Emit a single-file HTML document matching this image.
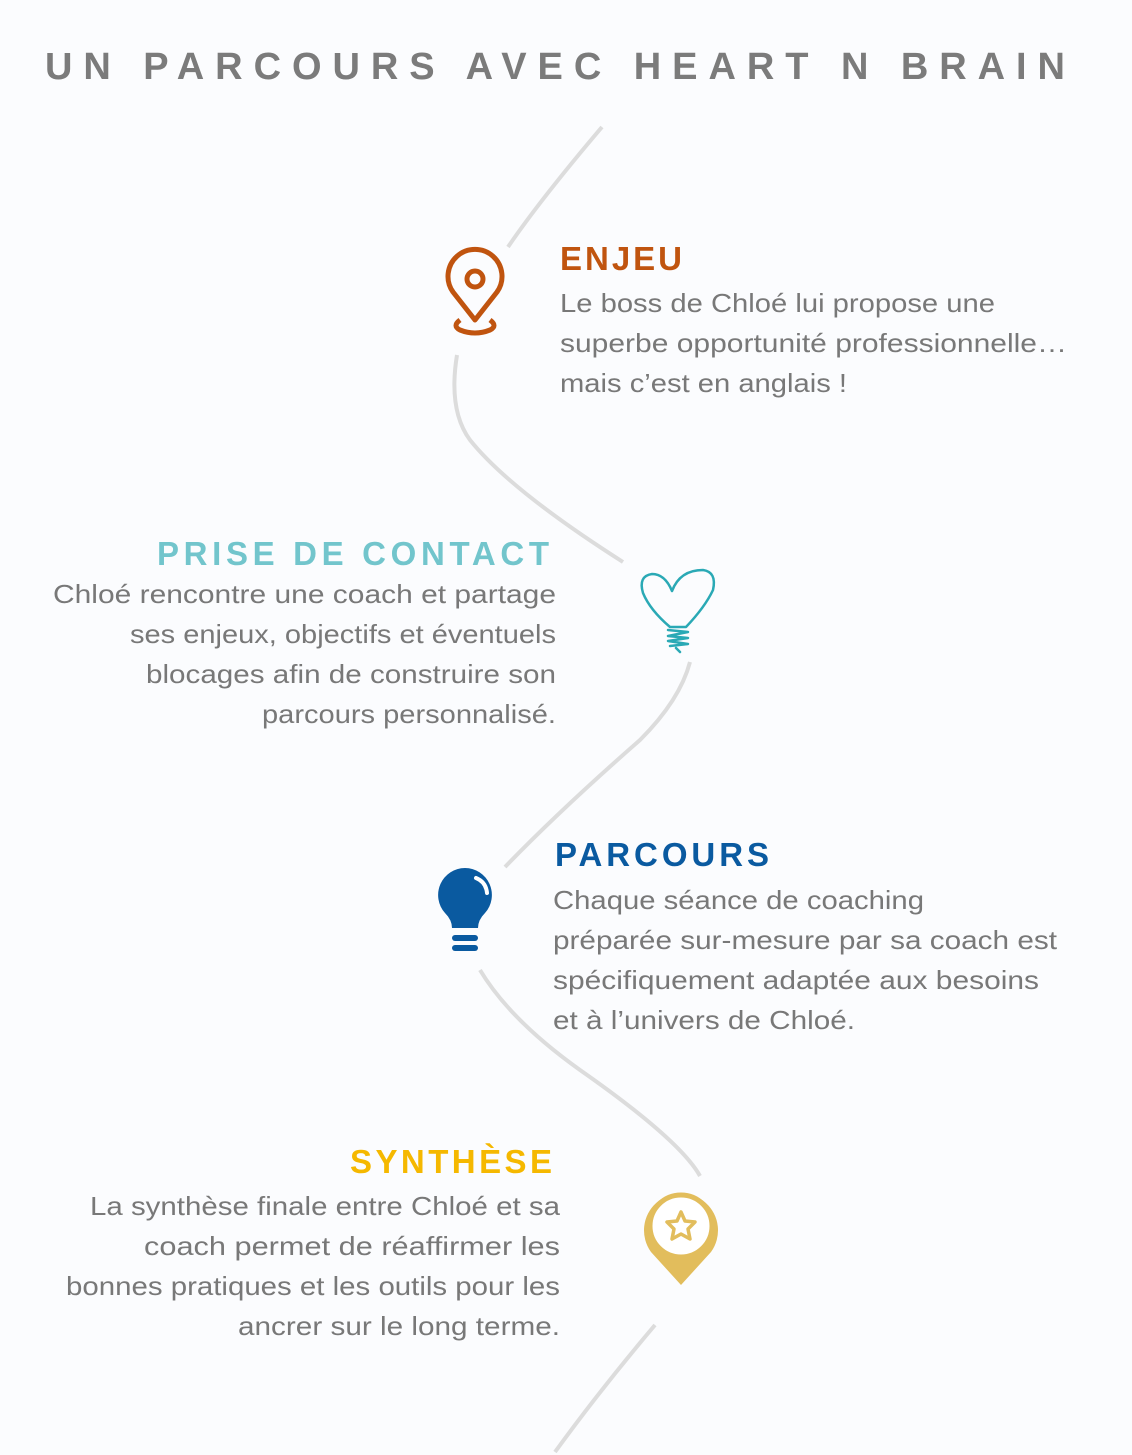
<!DOCTYPE html>
<html><head><meta charset="utf-8"><style>
html,body{margin:0;padding:0;background:#fbfcfe;}
svg{display:block}
text{font-family:"Liberation Sans",sans-serif;}
.b{fill:#787878;font-size:26px;}
.h{font-weight:bold;font-size:33px;}
</style></head><body>
<svg width="1132" height="1455" viewBox="0 0 1132 1455" xmlns="http://www.w3.org/2000/svg">
<rect width="1132" height="1455" fill="#fbfcfe"/>
<text x="45" y="79" textLength="1020" lengthAdjust="spacing" style="font-weight:bold;font-size:38px;fill:#7b7b7b">UN PARCOURS AVEC HEART N BRAIN</text>
<g fill="none" stroke="#dcdcdc" stroke-width="4" stroke-linecap="butt">
<path d="M602 127 Q540 200 508 247"/>
<path d="M457 355 Q448 410 470 440 Q510 490 623 562"/>
<path d="M690 662 Q680 700 640 740 Q560 810 505 867"/>
<path d="M480 970 Q510 1020 580 1070 Q680 1140 700 1176"/>
<path d="M655 1325 Q600 1390 555 1452"/>
</g>
<text class="h" x="560" y="270" textLength="122" lengthAdjust="spacing" fill="#c0540f">ENJEU</text>
<text class="b" x="560" y="312" textLength="435" lengthAdjust="spacingAndGlyphs">Le boss de Chloé lui propose une</text>
<text class="b" x="560" y="352" textLength="507" lengthAdjust="spacingAndGlyphs">superbe opportunité professionnelle…</text>
<text class="b" x="560" y="392" textLength="287" lengthAdjust="spacingAndGlyphs">mais c’est en anglais !</text>
<g fill="none" stroke="#c0540f" stroke-width="5" stroke-linejoin="round">
<path d="M475 320 L453 292 A27 27 0 1 1 497 292 Z"/>
<circle cx="475" cy="279" r="8"/>
<path d="M460 320 Q452 326 460 330 Q475 336 490 330 Q498 326 490 320"/>
</g>
<text class="h" x="157" y="565" textLength="392" lengthAdjust="spacing" fill="#72c5cc">PRISE DE CONTACT</text>
<text class="b" x="53" y="603" textLength="503" lengthAdjust="spacingAndGlyphs">Chloé rencontre une coach et partage</text>
<text class="b" x="130" y="643" textLength="426" lengthAdjust="spacingAndGlyphs">ses enjeux, objectifs et éventuels</text>
<text class="b" x="146" y="683" textLength="410" lengthAdjust="spacingAndGlyphs">blocages afin de construire son</text>
<text class="b" x="262" y="723" textLength="294" lengthAdjust="spacingAndGlyphs">parcours personnalisé.</text>
<g fill="none" stroke="#2aa9b5" stroke-width="2.5" stroke-linecap="round" stroke-linejoin="round">
<path d="M672 591 Q665 574 652 574 Q638 576 643 593 Q650 610 670 627 L686 627 Q705 607 713 590 Q717 572 703 570 Q680 570 672 591"/>
<path d="M668 630 L688 632 L668 636 L688 638 L668 641 L688 644 L670 646 M676 648 L680 652"/>
</g>
<text class="h" x="555" y="866" textLength="214" lengthAdjust="spacing" fill="#0a5aa0">PARCOURS</text>
<text class="b" x="553" y="909" textLength="371" lengthAdjust="spacingAndGlyphs">Chaque séance de coaching</text>
<text class="b" x="553" y="949" textLength="504" lengthAdjust="spacingAndGlyphs">préparée sur-mesure par sa coach est</text>
<text class="b" x="553" y="989" textLength="486" lengthAdjust="spacingAndGlyphs">spécifiquement adaptée aux besoins</text>
<text class="b" x="553" y="1029" textLength="302" lengthAdjust="spacingAndGlyphs">et à l’univers de Chloé.</text>
<g fill="#0a5aa0">
<path d="M465 868 A27 27 0 0 1 485 913 Q478 920 478 928 L452 928 Q452 920 445 913 A27 27 0 0 1 465 868 Z"/>
<rect x="452" y="935" width="26" height="6" rx="3"/>
<rect x="452" y="945" width="26" height="6" rx="3"/>
</g>
<path d="M476 878 Q486 882 487 893" fill="none" stroke="#fff" stroke-width="4" stroke-linecap="round"/>
<text class="h" x="350" y="1173" textLength="202" lengthAdjust="spacing" fill="#f5b800">SYNTHÈSE</text>
<text class="b" x="90" y="1215" textLength="470" lengthAdjust="spacingAndGlyphs">La synthèse finale entre Chloé et sa</text>
<text class="b" x="144" y="1255" textLength="416" lengthAdjust="spacingAndGlyphs">coach permet de réaffirmer les</text>
<text class="b" x="66" y="1295" textLength="494" lengthAdjust="spacingAndGlyphs">bonnes pratiques et les outils pour les</text>
<text class="b" x="238" y="1335" textLength="322" lengthAdjust="spacingAndGlyphs">ancrer sur le long terme.</text>
<path d="M681 1285 L651 1252 A37 37 0 1 1 711 1252 Z" fill="#e2bd5c"/>
<circle cx="681" cy="1226" r="31" fill="#fff"/>
<circle cx="681" cy="1226" r="31" fill="none" stroke="#e2bd5c" stroke-width="5"/>
<path d="M681 1212 L685 1221 L695 1222 L688 1229 L690 1239 L681 1234 L672 1239 L674 1229 L667 1222 L677 1221 Z" fill="none" stroke="#e2bd5c" stroke-width="3.5" stroke-linejoin="round"/>
</svg>
</body></html>
